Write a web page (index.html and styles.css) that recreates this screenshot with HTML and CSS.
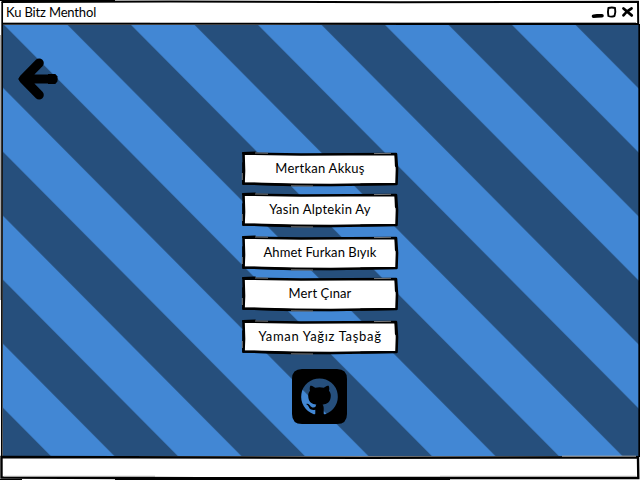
FILE: index.html
```
<!DOCTYPE html>
<html lang="tr">
<head>
<meta charset="utf-8">
<title>Ku Bitz Menthol</title>
<link rel="stylesheet" href="styles.css">
</head>
<body>
<svg class="defs" aria-hidden="true">
  <symbol id="frame" viewBox="0 0 158 36">
    <path d="M2.5 2.5 L60 3.5 L155 3 L156 18 L155.5 33 L90 34 L55 33.8 L2.5 32.5 L3 20 Z" fill="#fff" stroke="#000" stroke-width="2.6" stroke-linejoin="round"/>
    <path d="M2 2 L14 1.5 M2.3 12 L2.3 33 M154.5 4 L155 15 M3 32.5 L50 34.2 L110 34 M120 33.5 L155 33" fill="none" stroke="#000" stroke-width="2.2" stroke-linecap="round"/>
    <path d="M14 2 L27 2.2 M50 34.8 L72 35 M133 2.6 L150 2.3 M1.3 22 L1.3 29" fill="none" stroke="#777" stroke-width="1"/>
  </symbol>
</svg>
<div class="window">
  <header class="titlebar">
    <h1 class="title">Ku Bitz Menthol</h1>
    <svg class="controls" viewBox="0 0 44 16" aria-hidden="true">
      <path d="M3.5 12.2 L7 11.9 L12 11.8" stroke-width="3.6"/>
      <path d="M18.4 4 Q22 3 25 4 Q25.9 8 24.5 12 Q21 13.2 18.4 12 Q17.5 8 18.4 4Z" stroke-width="1.9"/>
      <path d="M33.5 4.5 L41.7 11.4 M41.5 4.4 Q36.5 7 33.5 11.3" stroke-width="2.8"/>
    </svg>
  </header>
  <main class="content">
    <svg class="stripes" aria-hidden="true">
      <defs>
        <pattern id="diagonal" x="1.2" y="0" width="127" height="128" patternUnits="userSpaceOnUse">
          <rect width="127" height="128" fill="#264f7c"/>
          <path d="M0 0H63.5L127 64V128ZM0 64L63.5 128H0Z" fill="#4287d4"/>
        </pattern>
      </defs>
      <rect width="100%" height="100%" fill="url(#diagonal)"/>
    </svg>
    <a class="back" aria-label="Geri">
      <svg viewBox="0 0 42 44"><path d="M22.2 6 L6.5 22 L22.2 38 M7 22 H36" fill="none" stroke="#000" stroke-width="9.2" stroke-linecap="round" stroke-linejoin="round"/><path d="M1 22L12 11V33Z"/><path d="M31 17.1H38.3L40.3 19.3V24.5L38.3 26.9H31Z"/></svg>
    </a>
    <nav class="people">
      <a class="person"><svg class="frame"><use href="#frame"/></svg><span class="w1">Mertkan Akkuş</span></a>
      <a class="person"><svg class="frame"><use href="#frame"/></svg><span class="w2">Yasin Alptekin Ay</span></a>
      <a class="person spaced"><svg class="frame"><use href="#frame"/></svg><span class="w3">Ahmet Furkan Bıyık</span></a>
      <a class="person"><svg class="frame"><use href="#frame"/></svg><span class="w4">Mert Çınar</span></a>
      <a class="person spaced"><svg class="frame"><use href="#frame"/></svg><span class="w5">Yaman Yağız Taşbağ</span></a>
      <a class="github" aria-label="GitHub">
        <svg viewBox="0 0 55 55">
          <path fill-rule="evenodd" d="M10 0H45Q55 0 55 10V45Q55 55 45 55H10Q0 55 0 45V10Q0 0 10 0ZM27.5 9.5A18.3 18.3 0 0 0 21.8 45.2C22.8 45.4 23.3 44.8 23.3 44.2V40.7C18.2 41.8 17.1 38.5 17.1 38.5C16.3 36.4 15.1 35.8 15.1 35.8C13.4 34.7 15.2 34.7 15.2 34.7C17 34.8 18 36.6 18 36.6C19.7 39.4 22.3 38.6 23.4 38.1C23.5 36.9 24 36.1 24.5 35.7C20 35.2 16.2 33.4 16.2 26.6C16.2 24.7 16.9 23.1 18.1 21.8C17.9 21.3 17.3 19.4 18.2 16.9C18.2 16.9 19.8 16.4 23.2 18.8Q27.5 17.6 31.8 18.8C35.2 16.4 36.8 16.9 36.8 16.9C37.7 19.4 37.1 21.3 36.9 21.8C38.1 23.1 38.8 24.7 38.8 26.6C38.8 33.4 35 35.2 30.5 35.7C31.2 36.3 31.7 37.4 31.7 39V44.2C31.7 44.8 32.2 45.4 33.2 45.2A18.3 18.3 0 0 0 27.5 9.5Z"/>
        </svg>
      </a>
    </nav>
  </main>
  <footer class="statusbar"></footer>
  <svg class="outline" viewBox="0 0 640 480" aria-hidden="true">
    <path d="M1.5 2 L170 1.6 L400 2.2 L638 1.8 L638.2 24 L420 24 L200 23.8 L2 23.8" stroke-width="2"/>
    <path d="M2.2 2 L2 240 L1.8 457 M639.2 24 V457" stroke-width="1.7"/>
    <path d="M1.5 457 L120 457.2 L360 457.8 L638 457.3 L638.3 478 L400 478 L200 478.3 L1.5 477.5 Z" stroke-width="2.4"/>
    <path d="M0 0.5H115M0 479.5H22M115 479.5H450" stroke-width="1"/>
    <path class="pale" d="M3 22.5H150M300 22.5H636M4 476.3H155M440 476.3H636M0.5 35V300M562 456.2H636"/>
  </svg>
</div>
</body>
</html>
```
FILE: styles.css
```
* { box-sizing: border-box; }
body {
  margin: 0;
  color: #000;
  font: 13px/16px Lato, "Open Sans", sans-serif;
}
.defs { position: absolute; width: 0; height: 0; }
.window {
  position: relative;
  display: flex;
  flex-direction: column;
  width: 640px;
  height: 480px;
  background: #fff;
  overflow: hidden;
}
.titlebar {
  display: flex;
  align-items: center;
  justify-content: space-between;
  height: 25px;
  padding: 0 6px 1px;
}
.title {
  margin: 0;
  font-size: 13px;
  font-weight: 400;
  letter-spacing: -0.15px;
}
.controls {
  width: 44px;
  height: 16px;
  fill: none;
  stroke: #000;
  stroke-linecap: round;
  stroke-linejoin: round;
}
.content {
  position: relative;
  flex: 1;
  margin: 0 1px 0 3px;
  padding-top: 126px;
}
.stripes {
  position: absolute;
  inset: 0;
  width: 100%;
  height: 100%;
}
.back {
  position: absolute;
  left: 14px;
  top: 32px;
  width: 42px;
  height: 44px;
}
.back svg, .github svg { display: block; width: 100%; height: 100%; }
.people {
  position: relative;
  display: flex;
  flex-direction: column;
  align-items: center;
  width: 634px;
}
.person {
  position: relative;
  display: flex;
  align-items: center;
  justify-content: center;
  width: 158px;
  height: 35px;
  margin-bottom: 6px;
  padding-bottom: 2px;
  white-space: nowrap;
}
.person.spaced { margin-top: 2px; }
.frame {
  position: absolute;
  inset: 0;
  width: 158px;
  height: 36px;
}
.person span { position: relative; }
.w1, .w2 { letter-spacing: 0.25px; }
.w3 { letter-spacing: 0.06px; }
.w4 { letter-spacing: 0.12px; }
.w5 { letter-spacing: 0.68px; }
.github {
  width: 55px;
  height: 55px;
  margin: 9px 1px 0 0;
}
.statusbar { height: 24px; }
.outline {
  position: absolute;
  inset: 0;
  width: 640px;
  height: 480px;
  fill: none;
  stroke: #000;
  pointer-events: none;
}
.outline .pale { stroke: #aaa; stroke-width: 1; }
```
